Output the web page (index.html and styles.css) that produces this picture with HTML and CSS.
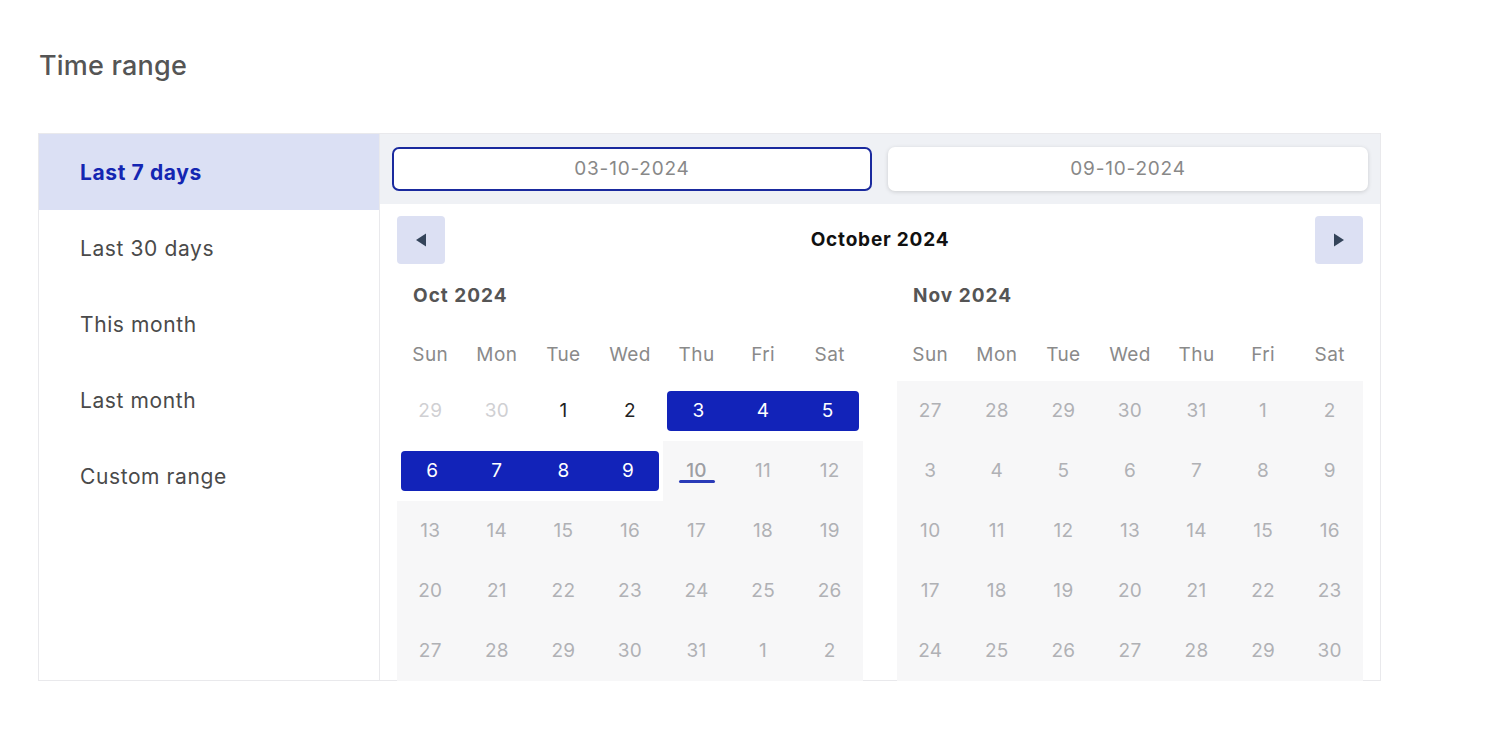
FILE: index.html
```html
<!DOCTYPE html>
<html lang="en">
<head>
    <meta charset="UTF-8" />
    <title>Time range</title>
    <link rel="stylesheet" href="styles.css">
</head>
<body>

<h2 class="title">Time range</h2>

<div class="picker">
    <ul class="presets">
        <li class="active">Last 7 days</li>
        <li>Last 30 days</li>
        <li>This month</li>
        <li>Last month</li>
        <li>Custom range</li>
    </ul>

    <div class="panel">
        <div class="inputs">
            <div class="date-input focused">03-10-2024</div>
            <div class="date-input">09-10-2024</div>
        </div>

        <div class="calendar">
            <div class="nav">
                <button class="nav-btn" type="button">
                    <svg width="12" height="16" viewBox="0 0 12 16"><path d="M1 8 L11 1.5 L11 14.5 Z" fill="#34445a"/></svg>
                </button>
                <span class="nav-title">October 2024</span>
                <button class="nav-btn" type="button">
                    <svg width="12" height="16" viewBox="0 0 12 16"><path d="M11 8 L1 1.5 L1 14.5 Z" fill="#34445a"/></svg>
                </button>
            </div>

            <div class="months">
                <div class="month" id="oct">
                    <div class="month-label">Oct 2024</div>
                    <div class="grid"></div>
                </div>
                <div class="month" id="nov">
                    <div class="month-label">Nov 2024</div>
                    <div class="grid"></div>
                </div>
            </div>
        </div>
    </div>
</div>

<script>
    const weekdays = ['Sun', 'Mon', 'Tue', 'Wed', 'Thu', 'Fri', 'Sat'];

    // day, state: o = outside month, n = normal, s = selected, t = today, d = disabled
    const octDays = [
        [29, 'o'], [30, 'o'], [1, 'n'], [2, 'n'], [3, 's'], [4, 's'], [5, 's'],
        [6, 's'], [7, 's'], [8, 's'], [9, 's'], [10, 't'], [11, 'd'], [12, 'd']
    ];
    for (let d = 13; d <= 31; d++) octDays.push([d, 'd']);
    octDays.push([1, 'd'], [2, 'd']);

    const novDays = [[27, 'd'], [28, 'd'], [29, 'd'], [30, 'd'], [31, 'd']];
    for (let d = 1; d <= 30; d++) novDays.push([d, 'd']);

    function render(el, days) {
        const grid = el.querySelector('.grid');
        let html = weekdays.map(w => `<div class="weekday">${w}</div>`).join('');
        days.forEach(([day, state], i) => {
            let cls = 'day day-' + state;
            if (state === 's') {
                const col = i % 7;
                const prev = days[i - 1];
                const next = days[i + 1];
                if (col === 0 || !prev || prev[1] !== 's') cls += ' first';
                if (col === 6 || !next || next[1] !== 's') cls += ' last';
            }
            html += `<div class="${cls}"><span>${day}</span></div>`;
        });
        grid.innerHTML = html;
    }

    render(document.getElementById('oct'), octDays);
    render(document.getElementById('nov'), novDays);
</script>

</body>
</html>
```

FILE: styles.css
```css
body {
    font-family: Inter, 'Noto Sans', sans-serif;
    background-color: #fff;
    color: #333;
    margin: 0;
    padding: 50px 38px;
}
.title {
    margin: 0 0 51px 1px;
    font-size: 27px;
    line-height: 32px;
    font-weight: 500;
    letter-spacing: 0.2px;
    color: #555;
}
.picker {
    display: flex;
    width: 1341px;
    height: 546px;
    border: 1px solid #e9e9ec;
}
.presets {
    list-style: none;
    margin: 0;
    padding: 0;
    width: 340px;
    border-right: 1px solid #e9e9ec;
}
.presets li {
    height: 76px;
    line-height: 78px;
    padding-left: 41px;
    font-size: 21px;
    letter-spacing: 0.6px;
    color: #4a4a4a;
}
.presets li.active {
    background-color: #dbe0f4;
    color: #1426b2;
    font-weight: 700;
}
.panel {
    flex: 1;
    display: flex;
    flex-direction: column;
}
.inputs {
    display: flex;
    gap: 16px;
    padding: 13px 12px;
    background-color: #eff1f5;
}
.date-input {
    flex: 1;
    height: 40px;
    line-height: 40px;
    text-align: center;
    background-color: #fff;
    border: 2px solid #fff;
    border-radius: 7px;
    font-size: 19px;
    letter-spacing: 0.8px;
    color: #888;
    box-shadow: 0 1px 4px rgba(0, 0, 0, 0.15);
}
.date-input.focused {
    border-color: #1a2a9e;
    box-shadow: none;
}
.calendar {
    padding: 0 17px;
}
.nav {
    display: flex;
    align-items: center;
    justify-content: space-between;
    margin-top: 12px;
    height: 48px;
}
.nav-btn {
    width: 48px;
    height: 48px;
    border: none;
    border-radius: 4px;
    background-color: #dce0f3;
    display: flex;
    align-items: center;
    justify-content: center;
    padding: 0;
}
.nav-title {
    font-size: 19px;
    font-weight: 700;
    letter-spacing: 0.8px;
    color: #111;
    margin-top: -2px;
}
.months {
    display: flex;
    gap: 34px;
}
.month {
    width: 466px;
}
.month-label {
    height: 64px;
    line-height: 64px;
    padding-left: 16px;
    font-size: 19px;
    font-weight: 700;
    letter-spacing: 1px;
    color: #555;
}
.grid {
    display: grid;
    grid-template-columns: repeat(7, 1fr);
    grid-template-rows: 53px repeat(5, 60px);
}
.weekday {
    text-align: center;
    line-height: 53px;
    font-size: 19px;
    letter-spacing: 0.4px;
    color: #8a8a8a;
}
.day {
    display: flex;
    align-items: center;
    justify-content: center;
    font-size: 19px;
    letter-spacing: 0.3px;
}
.day span {
    display: block;
    width: 100%;
    height: 40px;
    line-height: 40px;
    text-align: center;
}
.day-o {
    color: #d0d0d3;
}
.day-n {
    color: #222;
}
.day-d {
    background-color: #f7f7f8;
    color: #b0b1b5;
}
.day-t {
    background-color: #f7f7f8;
    color: #9d9ea3;
    font-weight: 500;
}
.day-t span {
    position: relative;
}
.day-t span::after {
    content: "";
    position: absolute;
    left: 16px;
    right: 15px;
    bottom: 8px;
    height: 3px;
    border-radius: 2px;
    background-color: #2a3bb8;
}
.day-s span {
    background-color: #1223b9;
    color: #fff;
}
.day-s.first span {
    margin-left: 4px;
    border-radius: 4px 0 0 4px;
}
.day-s.last span {
    margin-right: 4px;
    border-radius: 0 4px 4px 0;
}
.day-s.first.last span {
    border-radius: 4px;
}
```
